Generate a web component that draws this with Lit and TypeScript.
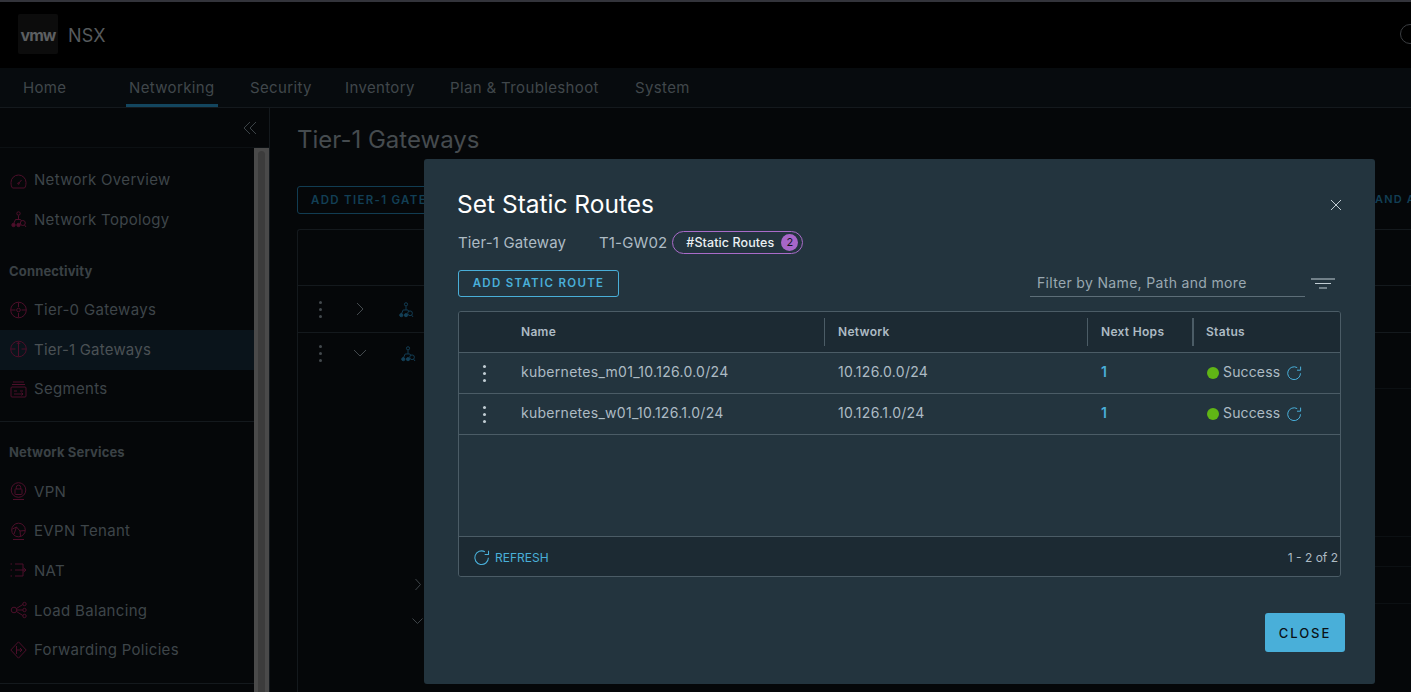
import { LitElement, html, css, svg } from "lit";
import { customElement } from "lit/decorators.js";

const refresh = (c: string) => html`<svg class=${c} viewBox="0 0 16 16" fill="none" stroke="currentColor" stroke-width="1"><path d="M14.5 8.3A6.4 6.4 0 1 1 11.2 2.6"/><path d="M14.6 1.6V5.2H11"/></svg>`;

const icons: Record<string, any> = {
  overview: svg`<path d="M2.500 17h12c1-1 1.500-3 1.500-5.500a7.500 7.500 0 0 0-15 0c0 2.500.5 4.500 1.500 5.500z"/><path d="M8.500 12.500l3-3.500"/><circle cx="8.500" cy="12.500" r=".8"/>`,
  topo: svg`<circle cx="8.500" cy="3.500" r="1.700"/><path d="M8.500 5.500v4M3.500 14l2-4.500h5l1 1.500"/><circle cx="3.500" cy="15" r="1.700" fill="currentColor"/><circle cx="8.500" cy="15" r="1.700" fill="currentColor"/><circle cx="12.800" cy="13" r="2.500"/><path d="M14.500 15l1.500 2"/>`,
  t0: svg`<circle cx="8.500" cy="9" r="7.800"/><circle cx="8.500" cy="9" r="1.800"/><path d="M8.500 1.500v4.500M8.500 12v4.500M1 9h4.500M11.500 9H16"/>`,
  t1: svg`<circle cx="8.500" cy="9" r="7.800"/><path d="M8.500 1.500V16.500M6.800 4l1.700-1.800L10.200 4M1 9h4.500M11.500 9H16"/>`,
  seg: svg`<rect x="1" y="7" width="15" height="10" rx="1"/><path d="M3 2h11M2 4.500h13M4 11h3M10 11h3M4 14h9M11.500 12.500l1.500 1.500-1.500 1.500"/>`,
  vpn: svg`<circle cx="8.500" cy="8" r="7.300"/><rect x="5" y="7" width="7" height="5.500" rx=".6"/><path d="M6.300 7V5.300a2.200 2.200 0 0 1 4.400 0V7M3 17.500h11"/>`,
  evpn: svg`<circle cx="8.500" cy="8" r="6.800"/><path d="M2.500 7l4-2 3.500 4 5-.5M6.500 5l-2.500 7M10 9l.5 5M3 17.500h11"/>`,
  nat: svg`<path d="M.500 3h1.500M.500 9h1.500M.500 15h1.500M5 3h8v12H5M5 9h11M13.500 6.800L16 9l-2.500 2.200"/>`,
  lb: svg`<circle cx="4" cy="9" r="2.800"/><circle cx="14.500" cy="3" r="1.700"/><circle cx="14.500" cy="9" r="1.700"/><circle cx="14.500" cy="15" r="1.700"/><path d="M6.500 7.500l6.300-4M7 9h5.800M6.500 10.500l6.300 4"/>`,
  fwd: svg`<path d="M8.500.800L16.200 9l-7.700 8.200L.800 9z"/><path d="M6.500 5v8M6.500 9h5.500M10 7l2 2-2 2"/>`,
};

const dots = (c: string) => html`<span class=${c}><i></i><i></i><i></i></span>`;
const topoIcon = html`<svg class="rowic" viewBox="0 0 17 18" fill="none" stroke="currentColor">${icons.topo}</svg>`;

@customElement("app-root")
export class AppRoot extends LitElement {
  static styles = css`
    :host { display: block; position: relative; width: 1411px; height: 692px; overflow: hidden; background: #050709; font-family: Inter, "Liberation Sans", sans-serif; color: #40474b; }
    * { box-sizing: border-box; }
    .page { height: 692px; display: flex; flex-direction: column; }
    .head { height: 68px; flex: none; background: #000; border-top: 2px solid #33343b; display: flex; align-items: center; padding: 0 0 3px 18px; position: relative; }
    .logo { width: 40px; height: 40px; padding-top: 3px; background: #0c0c0c; border-radius: 2px; display: flex; align-items: center; justify-content: center; font-size: 16px; font-weight: 700; letter-spacing: -1px; color: #5c5f61; }
    .brand { margin: 4px 0 0 10px; font-size: 18px; color: #565a5d; letter-spacing: .1px; }
    .ring { margin-left: auto; margin-right: -9px; width: 20px; height: 20px; border: 1px solid #3a3d40; border-radius: 50%; }
    .nav { height: 40px; flex: none; background: #070b0e; border-bottom: 1px solid #14191d; display: grid; grid-template-columns: 103px 124px 95px 105px 185px auto; padding-left: 23px; font-size: 15px; letter-spacing: .36px; line-height: 39px; white-space: nowrap; }
    .nav span { display: block; }
    .nav .on { width: 92px; padding-left: 3px; height: 39px; border-bottom: 3px solid #13465f; }
    .body { flex: 1; display: flex; min-height: 0; }
    .side { width: 270px; flex: none; border-right: 1px solid #14191d; position: relative; display: flex; flex-direction: column; }
    .collapse { height: 40px; flex: none; border-bottom: 1px solid #0c1013; display: flex; justify-content: flex-end; align-items: center; padding: 0 12px 0 0; color: #3c4347; }
    .collapse svg { width: 14px; height: 14px; }
    .menu { flex: 1; padding-top: 13px; margin-right: 15px; display: flex; flex-direction: column; overflow: hidden; }
    .item { height: 39.670px; flex: none; display: flex; align-items: center; padding: 0 0 2px 10px; font-size: 15px; letter-spacing: .32px; color: #3e4549; }
    .item svg { width: 17px; height: 18px; margin-right: 7px; color: #4d0f2a; flex: none; }
    .item.cur { background: #0a141b; color: #4a5155; letter-spacing: .2px; }
    .label { height: 50.500px; flex: none; display: flex; align-items: flex-end; padding: 0 0 12px 9px; font-size: 13px; letter-spacing: .15px; font-weight: 700; color: #3a4145; }
    .label.two { height: 50px; padding-bottom: 12px; }
    .rule { flex: none; border-bottom: 1px solid #14191d; margin-top: 11.500px; }
    .rule.end { margin-top: 12px; }
    .scroll { position: absolute; right: 0; top: 40px; bottom: 0; width: 15px; background: #4a4a4a; padding: 3px 4px 0; }
    .scroll i { display: block; width: 7px; height: 100%; border-radius: 4px 4px 0 0; background: #3c3c3c; }
    .main { flex: 1; padding: 17px 0 0 27px; min-width: 0; position: relative; }
    h1 { margin: 0; font-size: 24px; font-weight: 400; color: #454b4f; line-height: 30px; }
    .addbg { margin-top: 31px; height: 28px; width: 170px; border: 1px solid #113c52; border-radius: 3px; padding-left: 13px; font-size: 11.500px; font-weight: 600; letter-spacing: 1.300px; line-height: 26px; color: #123f55; white-space: nowrap; }
    .more { position: absolute; left: 1105px; top: 84px; font-size: 11px; font-weight: 600; letter-spacing: 1.200px; color: #123f55; white-space: nowrap; }
    .bgtable { margin-top: 15px; height: 480px; border: 1px solid #14191d; border-bottom: 0; border-right: 0; border-radius: 3px 0 0 0; }
    .bgrow { border-bottom: 1px solid #14191d; display: flex; align-items: center; color: #43494d; }
    .bgrow.h { height: 56px; }
    .bgrow.a { height: 47px; }
    .bgrow.b { border: 0; height: 40px; }
    .vd { display: flex; flex-direction: column; gap: 4px; width: 44px; align-items: center; }
    .vd i { width: 3px; height: 3px; background: #43494d; border-radius: 50%; }
    .chev { width: 10px; height: 14px; margin-left: 13px; color: #43494d; flex: none; }
    .chev.d { width: 14px; height: 10px; margin-left: 11px; }
    .rowic { width: 16px; height: 17px; margin-left: 33px; color: #133f56; }
    .ghost { display: flex; flex-direction: column; margin-top: 205px; padding-left: 116px; color: #3e4448; gap: 26px; }
    .ghost svg.r { width: 8px; height: 13px; }
    .ghost svg.dn { width: 11px; height: 8px; margin-left: -2px; }
    .lines { position: absolute; left: 1105px; right: 0; top: 280px; }
    .lines i { display: block; height: 1px; background: #0c1013; }
    .lines i:nth-child(2) { margin-top: 147px; }
    .lines i:nth-child(3) { margin-top: 29px; }
    .lines i:nth-child(4) { margin-top: 36px; }

    .modal { position: absolute; left: 424px; top: 159px; width: 951px; height: 525px; background: #23343e; border-radius: 3px; padding: 29px 30px 32px 33px; display: flex; flex-direction: column; color: #c1cdd4; }
    .mt { display: flex; align-items: center; justify-content: space-between; height: 32px; }
    .mt h2 { margin: 0; font-size: 24.500px; font-weight: 400; color: #fff; line-height: 32px; }
    .x { width: 12px; height: 12px; color: #c1cdd4; margin: 2px 3px 0 0; }
    .meta { margin-top: 10px; padding-left: 1px; height: 24px; display: flex; align-items: center; font-size: 15px; letter-spacing: .15px; color: #adbbc4; }
    .meta .k { width: 141px; }
    .pill { margin-left: 5px; height: 23px; width: 131px; border: 1px solid #a96bc9; border-radius: 12px; display: flex; align-items: center; padding-left: 13px; font-size: 12.500px; letter-spacing: .1px; font-weight: 500; color: #eaf0f3; white-space: nowrap; }
    .pill b { margin-left: auto; margin-right: 4px; width: 17px; height: 17px; border-radius: 50%; background: #a766c8; color: #10181d; font-size: 11px; font-weight: 400; display: flex; align-items: center; justify-content: center; }
    .tools { margin-top: 15px; padding-left: 1px; height: 28px; display: flex; align-items: center; }
    .add { height: 27px; width: 161px; border: 1px solid #49afd9; border-radius: 3px; background: none; color: #49afd9; font: 600 11.500px Inter, sans-serif; letter-spacing: 1.300px; padding: 0; }
    .filter { margin-left: auto; width: 275px; height: 27px; border-bottom: 1px solid #5d6e78; padding-left: 7px; font-size: 14px; letter-spacing: .33px; line-height: 25px; color: #9aa8b1; }
    .fi { width: 24px; height: 11px; margin-left: 6px; margin-right: 10px; color: #c1cdd4; }
    .table { margin-top: 14px; margin-left: 1px; width: 883px; height: 266px; border: 1px solid #4b5c66; border-radius: 3px; display: flex; flex-direction: column; overflow: hidden; }
    .row { display: grid; grid-template-columns: 62px 303px 263px 106px 1fr; height: 41px; border-bottom: 1px solid #4b5c66; align-items: center; font-size: 14px; letter-spacing: .28px; color: #adbbc4; flex: none; }
    .row.th { height: 41px; background: #1c2a33; font-size: 12px; letter-spacing: .3px; font-weight: 600; color: #adbbc4; }
    .th > span { height: 28px; display: flex; align-items: center; padding: 0 0 2px 13px; border-left: 1px solid #4b5c66; }
    .th > span.first { padding-left: 0; border: 0; }
    .th > span.thick { border-left-width: 2px; padding-left: 12px; margin-left: -1px; }
    .row > .nm { padding: 0 0 4px; }
    .row > .nw { padding: 0 0 4px 14px; }
    .row > .hop { padding: 0 0 4px 14px; color: #49afd9; font-weight: 600; }
    .row > .st { padding: 0 0 4px 14px; display: flex; align-items: center; letter-spacing: .15px; }
    .rd { display: flex; flex-direction: column; gap: 4px; align-items: center; width: 50px; }
    .rd i { width: 3px; height: 3px; border-radius: 50%; background: #c1cdd4; }
    .dot { width: 12px; height: 12px; border-radius: 50%; background: #60b515; margin: 4px 4px 0 0; }
    .ri { width: 16px; height: 16px; color: #49afd9; margin: 4px 0 0 6px; }
    .fill { flex: 1; border-bottom: 1px solid #4b5c66; }
    .foot { height: 39px; flex: none; background: #1c2a33; display: flex; align-items: center; padding: 2px 2px 0 14px; font-size: 12px; color: #adbbc4; }
    .refresh { display: flex; align-items: center; gap: 5px; color: #49afd9; font-size: 12px; }
    .refresh svg { width: 17px; height: 17px; }
    .count { margin-left: auto; }
    .acts { margin-top: auto; display: flex; justify-content: flex-end; }
    .close { width: 80px; height: 39px; background: #49afd9; border: 0; border-radius: 3px; color: #0b1216; font: 500 13px Inter, sans-serif; letter-spacing: 2px; padding: 0; }
  `;

  private item(icon: string, label: string, cur = false) {
    return html`<div class="item ${cur ? "cur" : ""}"><svg viewBox="0 0 17 18" fill="none" stroke="currentColor">${icons[icon]}</svg><span>${label}</span></div>`;
  }

  private route(name: string, net: string) {
    return html`<div class="row">
      <span>${dots("rd")}</span>
      <span class="nm">${name}</span>
      <span class="nw">${net}</span>
      <span class="hop">1</span>
      <span class="st"><i class="dot"></i>Success${refresh("ri")}</span>
    </div>`;
  }

  render() {
    return html`
      <div class="page">
        <div class="head"><div class="logo">vmw</div><div class="brand">NSX</div><div class="ring"></div></div>
        <div class="nav"><span>Home</span><span class="on">Networking</span><span>Security</span><span>Inventory</span><span>Plan &amp; Troubleshoot</span><span>System</span></div>
        <div class="body">
          <div class="side">
            <div class="collapse"><svg viewBox="0 0 14 14" fill="none" stroke="currentColor"><path d="M7 1L1 7l6 6M13 1L7 7l6 6"/></svg></div>
            <div class="menu">
              ${this.item("overview", "Network Overview")}
              ${this.item("topo", "Network Topology")}
              <div class="label">Connectivity</div>
              ${this.item("t0", "Tier-0 Gateways")}
              ${this.item("t1", "Tier-1 Gateways", true)}
              ${this.item("seg", "Segments")}
              <div class="rule"></div>
              <div class="label two">Network Services</div>
              ${this.item("vpn", "VPN")}
              ${this.item("evpn", "EVPN Tenant")}
              ${this.item("nat", "NAT")}
              ${this.item("lb", "Load Balancing")}
              ${this.item("fwd", "Forwarding Policies")}
              <div class="rule end"></div>
            </div>
            <div class="scroll"><i></i></div>
          </div>
          <div class="main">
            <h1>Tier-1 Gateways</h1>
            <div class="addbg">ADD TIER-1 GATEWAY</div>
            <div class="more">AND A</div>
            <div class="lines"><i></i><i></i><i></i><i></i></div>
            <div class="bgtable">
              <div class="bgrow h"></div>
              <div class="bgrow a">${dots("vd")}<svg class="chev" viewBox="0 0 10 14" fill="none" stroke="currentColor"><path d="M2 1l6 6-6 6"/></svg>${topoIcon}</div>
              <div class="bgrow b">${dots("vd")}<svg class="chev d" viewBox="0 0 14 10" fill="none" stroke="currentColor"><path d="M1 2l6 6 6-6"/></svg>${topoIcon}</div>
              <div class="ghost">
                <svg class="r" viewBox="0 0 8 13" fill="none" stroke="currentColor"><path d="M1.500 1l5 5.500-5 5.500"/></svg>
                <svg class="dn" viewBox="0 0 11 8" fill="none" stroke="currentColor"><path d="M.500 1.500l5 5 5-5"/></svg>
              </div>
            </div>
          </div>
        </div>
      </div>

      <div class="modal">
        <div class="mt"><h2>Set Static Routes</h2><svg class="x" viewBox="0 0 12 12" stroke="currentColor" fill="none"><path d="M1 1l10 10M11 1L1 11"/></svg></div>
        <div class="meta"><span class="k">Tier-1 Gateway</span><span>T1-GW02</span><span class="pill">#Static Routes<b>2</b></span></div>
        <div class="tools">
          <button class="add">ADD STATIC ROUTE</button>
          <div class="filter">Filter by Name, Path and more</div>
          <svg class="fi" viewBox="0 0 24 11" stroke="currentColor" fill="none"><path d="M0 1h24M4 5.500h16M8 10h8"/></svg>
        </div>
        <div class="table">
          <div class="row th"><span class="first"></span><span class="first">Name</span><span>Network</span><span>Next Hops</span><span class="thick">Status</span></div>
          ${this.route("kubernetes_m01_10.126.0.0/24", "10.126.0.0/24")}
          ${this.route("kubernetes_w01_10.126.1.0/24", "10.126.1.0/24")}
          <div class="fill"></div>
          <div class="foot"><span class="refresh">${refresh("")}REFRESH</span><span class="count">1 - 2 of 2</span></div>
        </div>
        <div class="acts"><button class="close">CLOSE</button></div>
      </div>
    `;
  }
}
